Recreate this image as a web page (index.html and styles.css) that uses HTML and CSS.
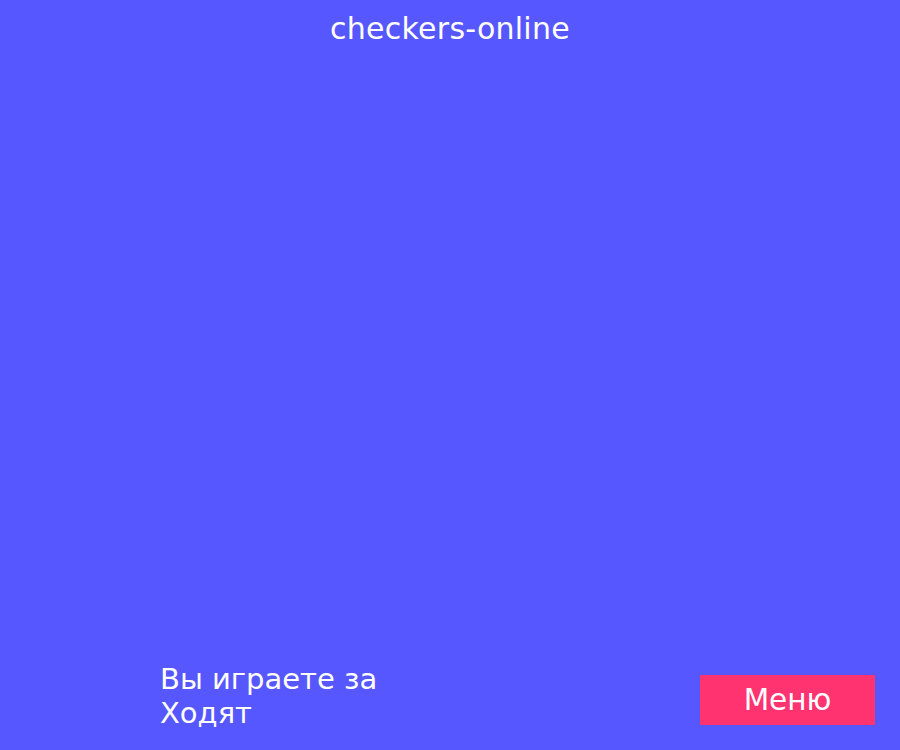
FILE: index.html
```html
<!DOCTYPE html>
<html lang="ru">
<head>
<meta charset="utf-8">
<title>checkers-online</title>
<link rel="stylesheet" href="styles.css">
</head>
<body>
<div class="app">
  <header class="title">checkers-online</header>
  <main class="board"></main>
  <footer class="footer">
    <div class="info">
      <div class="line">Вы играете за</div>
      <div class="line">Ходят</div>
    </div>
    <button class="menu">Меню</button>
  </footer>
</div>
</body>
</html>
```
FILE: styles.css
```css
html, body {
  margin: 0;
  padding: 0;
  background: #5757ff;
}
.app {
  height: 750px;
  display: flex;
  flex-direction: column;
  font-family: "DejaVu Sans", sans-serif;
  color: #ffffff;
}
.title {
  text-align: center;
  font-size: 30px;
  letter-spacing: 0.25px;
  padding-top: 11px;
}
.board {
  flex: 1;
}
.footer {
  display: flex;
  justify-content: space-between;
  align-items: flex-end;
  padding: 0 25px 20px 160px;
}
.info {
  font-size: 29px;
}
.menu {
  width: 175px;
  height: 50px;
  margin-bottom: 5px;
  background: #ff3370;
  border: none;
  color: #ffffff;
  font-family: "DejaVu Sans", sans-serif;
  font-size: 29.5px;
  padding: 0;
}
```
